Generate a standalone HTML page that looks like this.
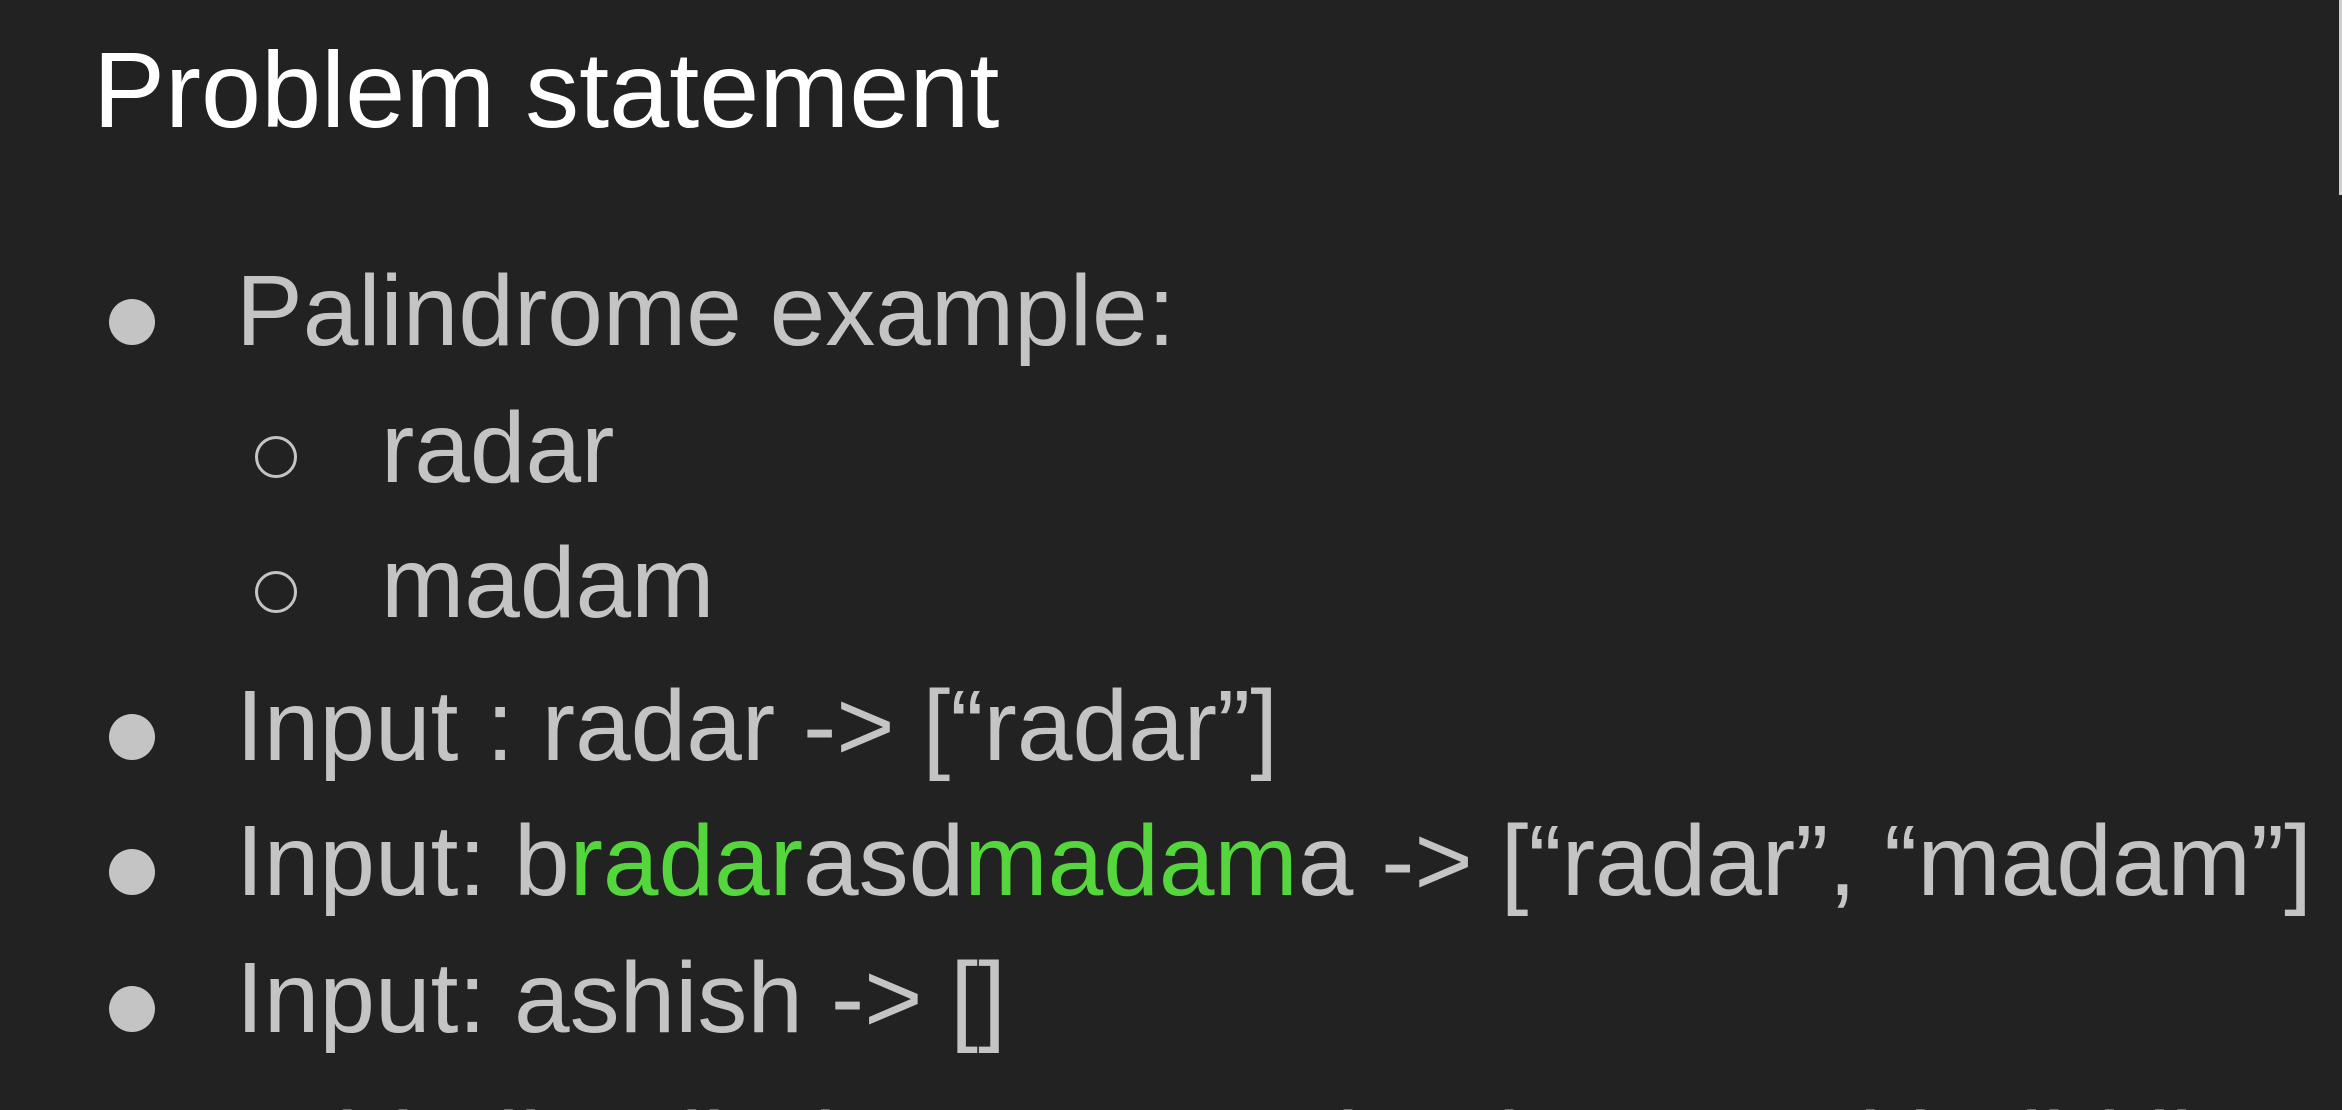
<!DOCTYPE html>
<html><head><style>
html,body{margin:0;padding:0;width:2342px;height:1110px;overflow:hidden;background:#222222;}
#w{width:2342px;height:1110px;background:#222222;position:relative;overflow:hidden;font-family:"Liberation Sans",Arial,sans-serif;}
.t{position:absolute;white-space:nowrap;line-height:1;}
.title{left:93px;top:0;font-size:108px;color:#ffffff;}
.l{font-size:100px;color:#c4c4c4;}
.g{color:#55d63c;}
.dot{position:absolute;width:46px;height:46px;border-radius:50%;background:#c4c4c4;}
.ring{position:absolute;width:36px;height:36px;border-radius:50%;border:3px solid #c4c4c4;}
</style></head><body><div id="w">
<div class="t title" style="top:36px">Problem statement</div>

<div class="dot" style="left:109px;top:299px"></div>
<div class="t l" style="left:236px;top:261px">Palindrome example:</div>

<div class="ring" style="left:255px;top:436px"></div>
<div class="t l" style="left:381px;top:398px">radar</div>

<div class="ring" style="left:255px;top:571px"></div>
<div class="t l" style="left:381px;top:533px">madam</div>

<div class="dot" style="left:109px;top:714px"></div>
<div class="t l" style="left:236px;top:676px">Input : radar -&gt; [“radar”]</div>

<div class="dot" style="left:109px;top:849px"></div>
<div class="t l" style="left:236px;top:811px">Input: b<span class="g">radar</span>asd<span class="g">madam</span>a -&gt; [“radar”, “madam”]</div>

<div class="dot" style="left:109px;top:986px"></div>
<div class="t l" style="left:236px;top:948px">Input: ashish -&gt; []</div>

<div style="position:absolute;left:0;top:1090px;width:2342px;height:20px;overflow:hidden">
<div class="t l" style="left:236px;top:8px">Add all palindromes to a hashset and build list</div>
</div>

<div style="position:absolute;left:2339px;top:0;width:3px;height:195px;background:#cfcfcf"></div>
</div></body></html>
